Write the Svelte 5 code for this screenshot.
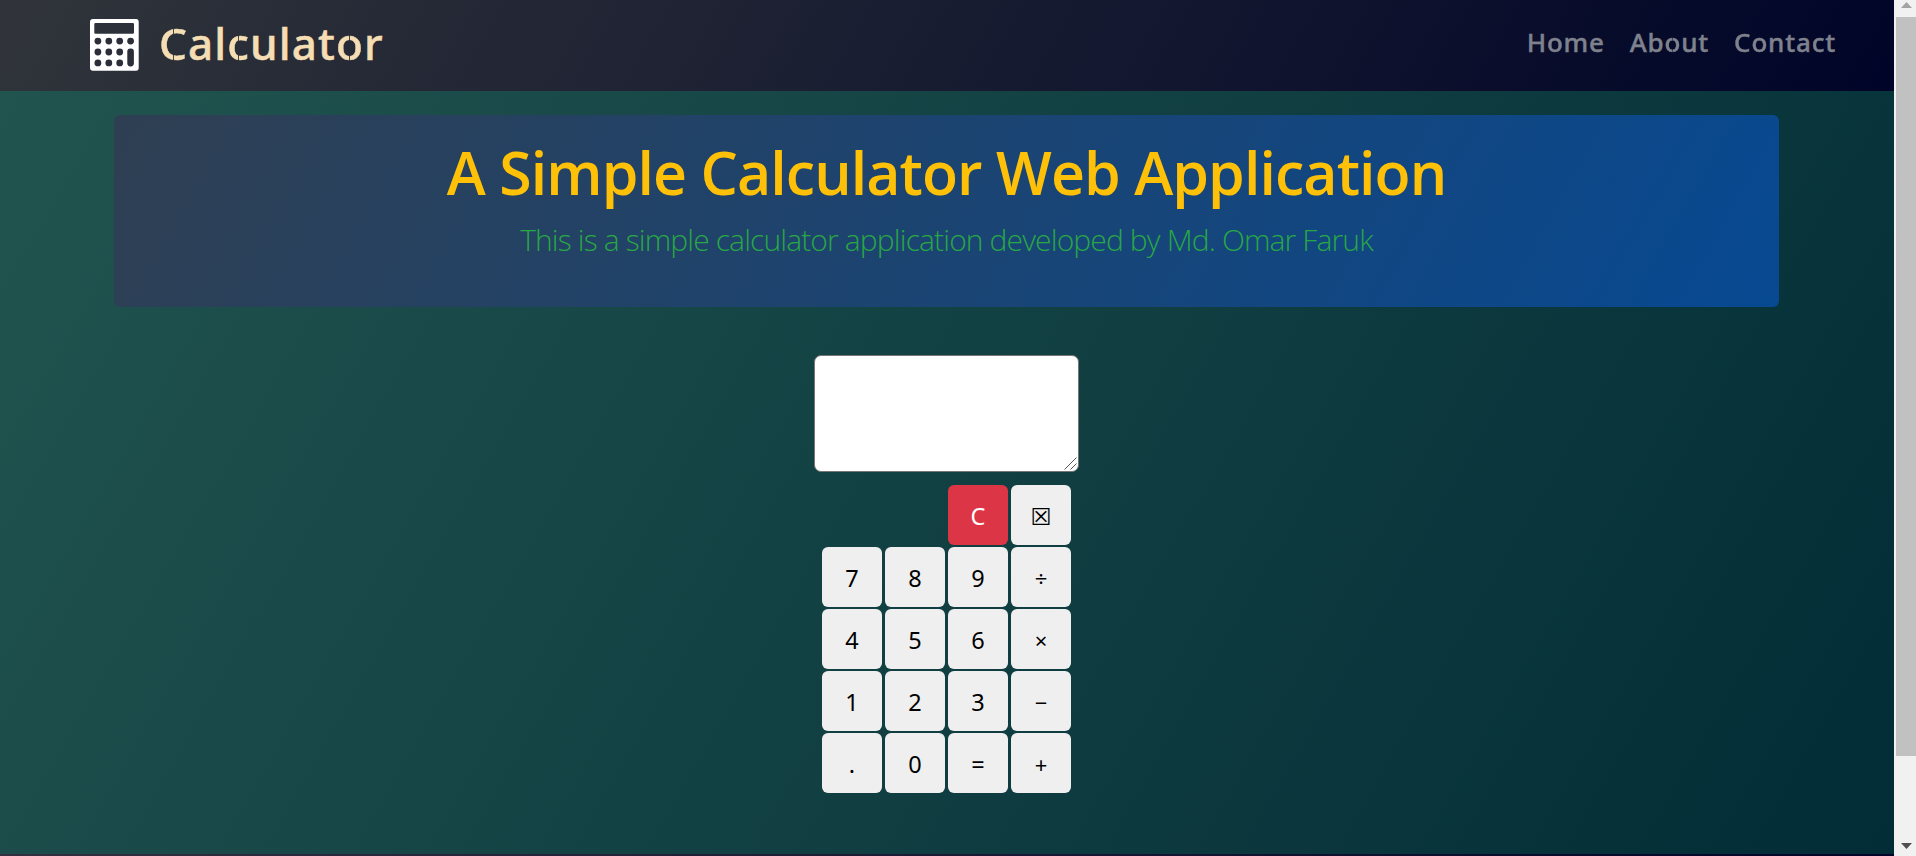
<script>
  const rows = [
    ['7', '8', '9', '÷'],
    ['4', '5', '6', '×'],
    ['1', '2', '3', '−'],
    ['.', '0', '=', '+']
  ];
  const links = ['Home', 'About', 'Contact'];
  const slit = 'Cco';
</script>

{#snippet stencil(word)}{#each word as ch}<span class:cut={slit.includes(ch)}>{ch}</span>{/each}{/snippet}

<div class="screen">
  <div class="page">
    <nav>
      <div class="brand">
        <svg width="49" height="52" viewBox="0 0 49 52">
          <path fill="#fff" fill-rule="evenodd" d="M3 0H46Q48.7 0 48.7 3V48.7Q48.7 51.7 46 51.7H3Q0 51.7 0 48.7V3Q0 0 3 0ZM5.5 4Q4.3 4 4.3 5.2V13.5Q4.3 14.7 5.5 14.7H42.8Q44 14.7 44 13.5V5.2Q44 4 42.8 4Z" />
          <g fill="#2b2e38">
            {#each [22.1, 33, 43.9] as y, r}
              {#each [7.9, 18.8, 29.7, 40.6] as x, c}
                {#if r === 0 || c < 3}<circle cx={x} cy={y} r="3.4" />{/if}
              {/each}
            {/each}
            <rect x="37.3" y="29.6" width="6.6" height="17.8" rx="3.1" />
          </g>
        </svg>
        <span class="name">{@render stencil('Calculator')}</span>
      </div>
      <div class="links">
        {#each links as l}<a href="#top">{@render stencil(l)}</a>{/each}
      </div>
    </nav>
    <main>
      <header>
        <h1>A Simple Calculator Web Application</h1>
        <p>This is a simple calculator application developed by Md. Omar Faruk</p>
      </header>
      <div class="display">
        <textarea aria-label="Display"></textarea>
        <svg class="grip" width="13" height="13" viewBox="0 0 13 13"><path d="M.5 12.5L12.5 .5M6.5 12.5L12.5 6.5" stroke="#555" stroke-width="1" /></svg>
      </div>
      <div class="keys">
        <button class="clear">C</button>
        <button>☒</button>
        {#each rows as row}{#each row as k, i}<button class:op={i === 3}>{k}</button>{/each}{/each}
      </div>
    </main>
    <footer></footer>
  </div>
  <div class="bar">
    <svg width="11" height="6" viewBox="0 0 11 6"><path d="M0 6L5.5 0L11 6Z" fill="#a3a3a3" /></svg>
    <div class="thumb"></div>
    <svg class="down" width="11" height="6" viewBox="0 0 11 6"><path d="M0 0L5.5 6L11 0Z" fill="#505050" /></svg>
  </div>
</div>

<style>
  :global(body) { margin: 0; overflow: hidden; }
  .screen { display: flex; width: 1916px; height: 856px; overflow: hidden; font-family: "Open Sans", "Noto Sans", sans-serif; }
  .page { width: 1894px; display: flex; flex-direction: column; }
  nav { height: 91px; flex: none; box-sizing: border-box; padding: 0 58px 0 90px; display: flex; justify-content: space-between; background: linear-gradient(120deg, #30343a, #000428); font-family: "Noto Sans", sans-serif; }
  .brand { display: flex; gap: 20px; padding-top: 19px; }
  .name { font-size: 44px; line-height: 50px; font-weight: 500; letter-spacing: 1.1px; color: #f5deb3; margin-top: -1px; -webkit-text-stroke: .5px #f5deb3; }
  .links { display: flex; gap: 25px; padding-top: 23px; }
  .links a { font-size: 26px; line-height: 38px; font-weight: 500; letter-spacing: .8px; color: #7f828c; text-decoration: none; -webkit-text-stroke: .4px #7f828c; }
  .name .cut { mask-image: linear-gradient(90deg, #000 calc(50% - 1px), rgba(0, 0, 0, .15) calc(50% - .9px) calc(50% + .1px), #000 calc(50% + .2px)); }
  .links .cut { mask-image: linear-gradient(90deg, #000 calc(50% - 1px), rgba(0, 0, 0, .5) calc(50% - .9px) calc(50% - .1px), #000 50%); }
  main { height: 763px; flex: none; box-sizing: border-box; padding-right: 1px; display: flex; flex-direction: column; align-items: center; background: linear-gradient(120deg, #21544f, #022c36); }
  header { width: 1665px; height: 192px; margin-top: 24px; border-radius: 6px; text-align: center; background: linear-gradient(120deg, #2f3f52, #074992); }
  h1 { margin: 21px 0 0; font-size: 59px; line-height: 72px; font-weight: 600; letter-spacing: -.92px; color: #ffc107; white-space: nowrap; }
  p { margin: 10px 0 0; font-size: 30px; line-height: 44px; font-weight: 300; letter-spacing: -.87px; color: #28a745; white-space: nowrap; }
  .display { position: relative; margin-top: 48px; width: 265px; height: 117px; flex: none; }
  textarea { display: block; box-sizing: border-box; width: 100%; height: 100%; border: 1px solid #767676; border-radius: 7px; background: #fff; resize: none; }
  .grip { position: absolute; right: 2px; bottom: 2px; }
  .keys { display: grid; grid-template-columns: repeat(4, 60px); grid-auto-rows: 60px; gap: 2px 3px; margin-top: 13px; }
  button { border: 0; padding: 2px 0 0; border-radius: 6px; background: #efefef; color: #000; font: 400 23.5px/58px "Noto Sans", "DejaVu Sans", sans-serif; }
  .op { font-size: 22px; }
  .clear { grid-column: 3; background: #dc3545; color: #fff; }
  footer { height: 2px; background: linear-gradient(90deg, #322f40, #000428); }
  .bar { width: 22px; background: #f1f1f1; display: flex; flex-direction: column; align-items: center; }
  .bar svg { margin: 2px 0 9px 3px; flex: none; }
  .thumb { width: 20px; margin-left: 2px; height: 739px; background: #c1c1c1; }
  .bar .down { margin: 87px 0 0 3px; }
</style>
